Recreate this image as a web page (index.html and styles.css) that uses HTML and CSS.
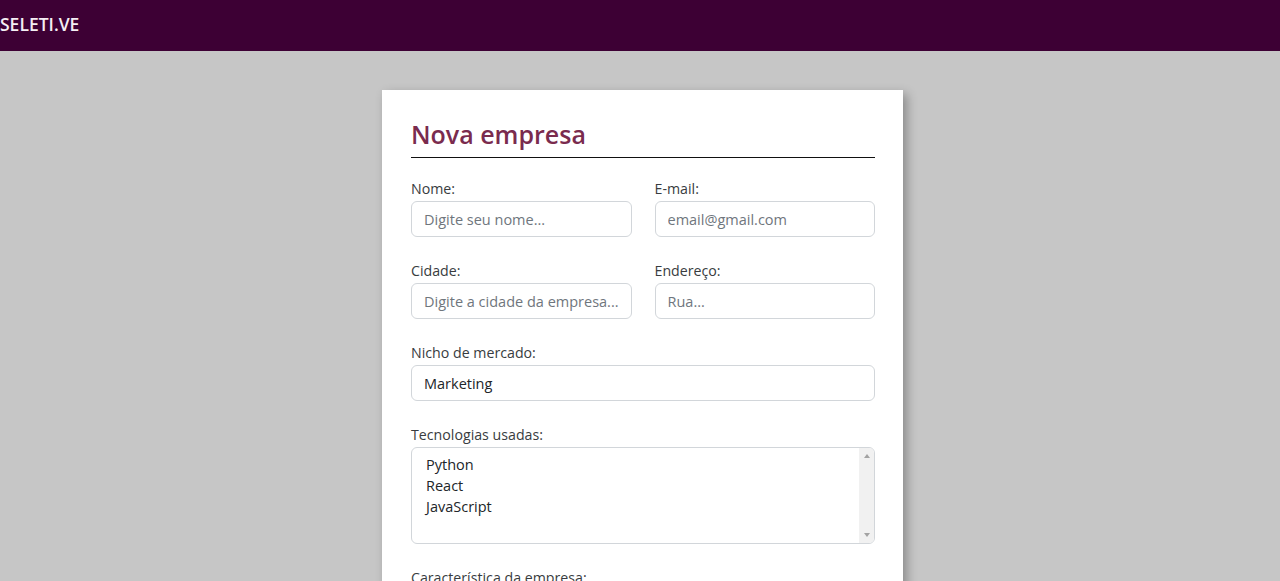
FILE: index.html
```html
<!DOCTYPE html>
<html lang="pt-BR">
<head>
<meta charset="utf-8">
<title>SELETI.VE - Nova empresa</title>
<link rel="stylesheet" href="styles.css">
</head>
<body>
<header class="topbar">
  <span class="brand">SELETI.VE</span>
</header>
<main class="page">
  <form class="card">
    <h1 class="card-title">Nova empresa</h1>
    <div class="row two">
      <div class="field">
        <label class="label" for="nome">Nome:</label>
        <input class="input" id="nome" type="text" placeholder="Digite seu nome...">
      </div>
      <div class="field">
        <label class="label" for="email">E-mail:</label>
        <input class="input" id="email" type="email" placeholder="email@gmail.com">
      </div>
    </div>
    <div class="row two">
      <div class="field">
        <label class="label" for="cidade">Cidade:</label>
        <input class="input" id="cidade" type="text" placeholder="Digite a cidade da empresa...">
      </div>
      <div class="field">
        <label class="label" for="endereco">Endereço:</label>
        <input class="input" id="endereco" type="text" placeholder="Rua...">
      </div>
    </div>
    <div class="row">
      <div class="field">
        <label class="label" for="nicho">Nicho de mercado:</label>
        <input class="input" id="nicho" type="text" value="Marketing">
      </div>
    </div>
    <div class="row">
      <div class="field">
        <span class="label">Tecnologias usadas:</span>
        <div class="listbox">
          <ul class="list-items">
            <li>Python</li>
            <li>React</li>
            <li>JavaScript</li>
          </ul>
          <div class="scrollbar">
            <span class="arrow up"></span>
            <span class="arrow down"></span>
          </div>
        </div>
      </div>
    </div>
    <div class="row">
      <div class="field">
        <label class="label" for="carac">Característica da empresa:</label>
        <input class="input" id="carac" type="text">
      </div>
    </div>
  </form>
</main>
</body>
</html>
```
FILE: styles.css
```css
* { box-sizing: border-box; }

html, body {
  margin: 0;
  padding: 0;
}

body {
  background: #c6c6c6;
  font-family: "Open Sans", "Noto Sans", Arial, sans-serif;
  color: #212529;
  overflow: hidden;
}

.topbar {
  height: 51px;
  background: #3d0034;
  display: flex;
  align-items: center;
}

.brand {
  color: #f4eef3;
  font-size: 17.5px;
  line-height: 1;
  font-weight: 600;
  margin-top: -1px;
}

.page {
  display: flex;
  justify-content: center;
  padding: 39px 0 40px 5px;
}

.card {
  width: 521px;
  background: #ffffff;
  padding: 28px 28px 29px 29px;
  box-shadow: 4px 4px 10px rgba(0, 0, 0, 0.3);
}

.card-title {
  margin: 0 0 20px 0;
  font-size: 25px;
  line-height: 32px;
  font-weight: 600;
  color: #7a2b4e;
  padding-bottom: 7px;
  border-bottom: 1px solid #111;
}

.row {
  display: grid;
  grid-template-columns: 1fr;
  gap: 23px;
  margin-bottom: 23px;
}

.row.two {
  grid-template-columns: 1fr 1fr;
}

.field {
  display: flex;
  flex-direction: column;
  min-width: 0;
}

.label {
  font-size: 14.2px;
  line-height: 21px;
  margin-bottom: 2px;
  color: #383c40;
}

.input {
  height: 36px;
  width: 100%;
  padding: 0 12px;
  border: 1px solid #d2d6da;
  border-radius: 6px;
  font-family: inherit;
  font-size: 14.5px;
  color: #212529;
  background: #fff;
  outline: none;
}

.input::placeholder {
  color: #6f767d;
}

.listbox {
  height: 97px;
  border: 1px solid #d2d6da;
  border-radius: 6px;
  display: flex;
  overflow: hidden;
}

.list-items {
  flex: 1;
  list-style: none;
  margin: 0;
  padding: 6px 14px;
  font-size: 14.5px;
  line-height: 21px;
  color: #212529;
}

.scrollbar {
  width: 15px;
  background: #f1f1f1;
  display: flex;
  flex-direction: column;
  justify-content: space-between;
  align-items: center;
  padding: 6px 0 6px;
}

.arrow {
  width: 0;
  height: 0;
  border-left: 3.5px solid transparent;
  border-right: 3.5px solid transparent;
}

.arrow.up {
  border-bottom: 4px solid #a3a3a3;
}

.arrow.down {
  border-top: 4px solid #a3a3a3;
}
```
